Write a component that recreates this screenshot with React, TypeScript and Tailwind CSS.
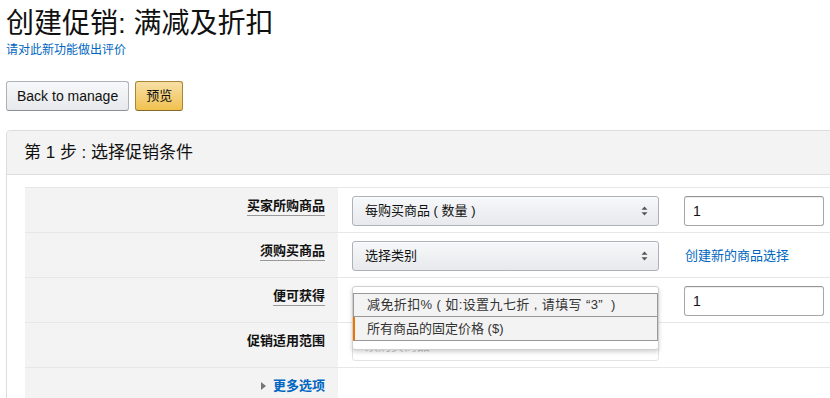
import React from 'react';

const font = { fontFamily: '"Liberation Sans", Arial, "Noto Sans CJK SC", sans-serif' };

function Arrows() {
  return (
    <svg width="7" height="10" viewBox="0 0 7 10" className="shrink-0">
      <path d="M3.5 0.5 L6.5 3.8 L0.5 3.8 Z" fill="#555" />
      <path d="M3.5 9.5 L6.5 6.2 L0.5 6.2 Z" fill="#555" />
    </svg>
  );
}

function Select({ text, faded }: { text: string; faded?: boolean }) {
  return (
    <div
      className={
        faded
          ? 'w-[307px] h-[30px] rounded-[3px] border border-[#e3e3e3] bg-white flex items-center px-[12px] text-[13px] text-[#c5c5c5]'
          : 'w-[307px] h-[30px] rounded-[3px] border border-[#adb1b8] bg-gradient-to-b from-[#f7f8fa] to-[#e7e9ec] shadow-[0_1px_0_rgba(255,255,255,0.6)_inset] flex items-center justify-between pl-[12px] pr-[10px] text-[13px] text-[#111]'
      }
    >
      <span>{text}</span>
      {!faded && <Arrows />}
    </div>
  );
}

function NumInput() {
  return (
    <div className="ml-[25px] w-[140px] h-[30px] rounded-[3px] border border-[#a6a6a6] border-t-[#949494] bg-white shadow-[0_1px_0_rgba(0,0,0,0.07)_inset] flex items-center px-[8px] text-[14px] text-[#111]">
      1
    </div>
  );
}

function Label({ text }: { text: string }) {
  return (
    <span className="block font-bold text-[13px] leading-[16px] text-[#111] border-b border-[#999] pb-[1px]">
      {text}
    </span>
  );
}

function Row({ left, children }: { left: React.ReactNode; children?: React.ReactNode }) {
  return (
    <div className="flex h-[45px] border-t border-[#e7e7e7]">
      <div className="w-[313px] shrink-0 bg-[#f3f3f3] flex justify-end items-start pr-[13px] pt-[10px]">{left}</div>
      <div className="flex-1 pl-[14px] pt-[8px] flex items-start relative">{children}</div>
    </div>
  );
}

export default function App() {
  return (
    <div className="w-[830px] h-[398px] overflow-hidden bg-white text-[#111]" style={font}>
      <div className="pt-[7px] pl-[6px]">
        <h1 className="text-[28px] leading-[34px] font-normal text-[#111]">创建促销: 满减及折扣</h1>
        <a className="block mt-[2px] text-[12px] leading-[14px] text-[#0066c0]">请对此新功能做出评价</a>

        <div className="mt-[24px] flex gap-[6px]">
          <button className="h-[30px] px-[10px] rounded-[3px] border border-[#adb1b8] border-b-[#8d9096] bg-gradient-to-b from-[#f7f8fa] to-[#e7e9ec] text-[14px] text-[#111]">
            Back to manage
          </button>
          <button className="h-[30px] w-[48px] rounded-[3px] border border-[#a88734] border-b-[#846a29] bg-gradient-to-b from-[#f7dfa5] to-[#f0c14b] text-[13px] text-[#111]">
            预览
          </button>
        </div>

        <div className="mt-[19px] w-[860px] border border-[#dddddd] rounded-[4px]">
          <div className="h-[44px] bg-[#f3f3f3] border-b border-[#dddddd] rounded-t-[4px] flex items-center pl-[17px] text-[17px] text-[#111]">
            第 1 步 : 选择促销条件
          </div>
          <div className="pt-[12px] pl-[18px]">
            <Row left={<Label text="买家所购商品" />}>
              <Select text="每购买商品 ( 数量 )" />
              <NumInput />
            </Row>
            <Row left={<Label text="须购买商品" />}>
              <Select text="选择类别" />
              <a className="ml-[26px] mt-[7px] text-[13px] leading-[16px] text-[#0066c0]">创建新的商品选择</a>
            </Row>
            <Row left={<Label text="便可获得" />}>
              <div className="relative w-[307px] h-[30px]">
                <div className="absolute left-0 top-0 z-10 w-[307px] bg-white border border-[#d0d0d0] rounded-[3px] shadow-[0_2px_4px_rgba(0,0,0,0.18)] pt-[6px] pb-[8px]">
                  <div className="h-[24px] bg-[#f3f3f3] border border-[#999] flex items-center pl-[13px] text-[13px] tracking-[0.4px] text-[#333] whitespace-pre">
                    减免折扣% ( 如:设置九七折 , 请填写 “3”  )
                  </div>
                  <div className="h-[24px] bg-[#f3f3f3] border border-t-0 border-[#999] border-l-2 border-l-[#e77600] flex items-center pl-[12px] text-[13px] text-[#333]">
                    所有商品的固定价格 ($)
                  </div>
                </div>
              </div>
              <NumInput />
            </Row>
            <Row left={<span className="block font-bold text-[13px] leading-[16px] text-[#111] pb-[2px]">促销适用范围</span>} >
              <Select text="须购买商品" faded />
            </Row>
            <Row
              left={
                <div className="flex items-center gap-[7px] h-[16px]">
                  <svg width="5" height="8" viewBox="0 0 5 8">
                    <path d="M0 0 L5 4 L0 8 Z" fill="#777" />
                  </svg>
                  <span className="font-bold text-[13px] leading-[16px] text-[#0066c0]">更多选项</span>
                </div>
              }
            />
          </div>
        </div>
      </div>
    </div>
  );
}
